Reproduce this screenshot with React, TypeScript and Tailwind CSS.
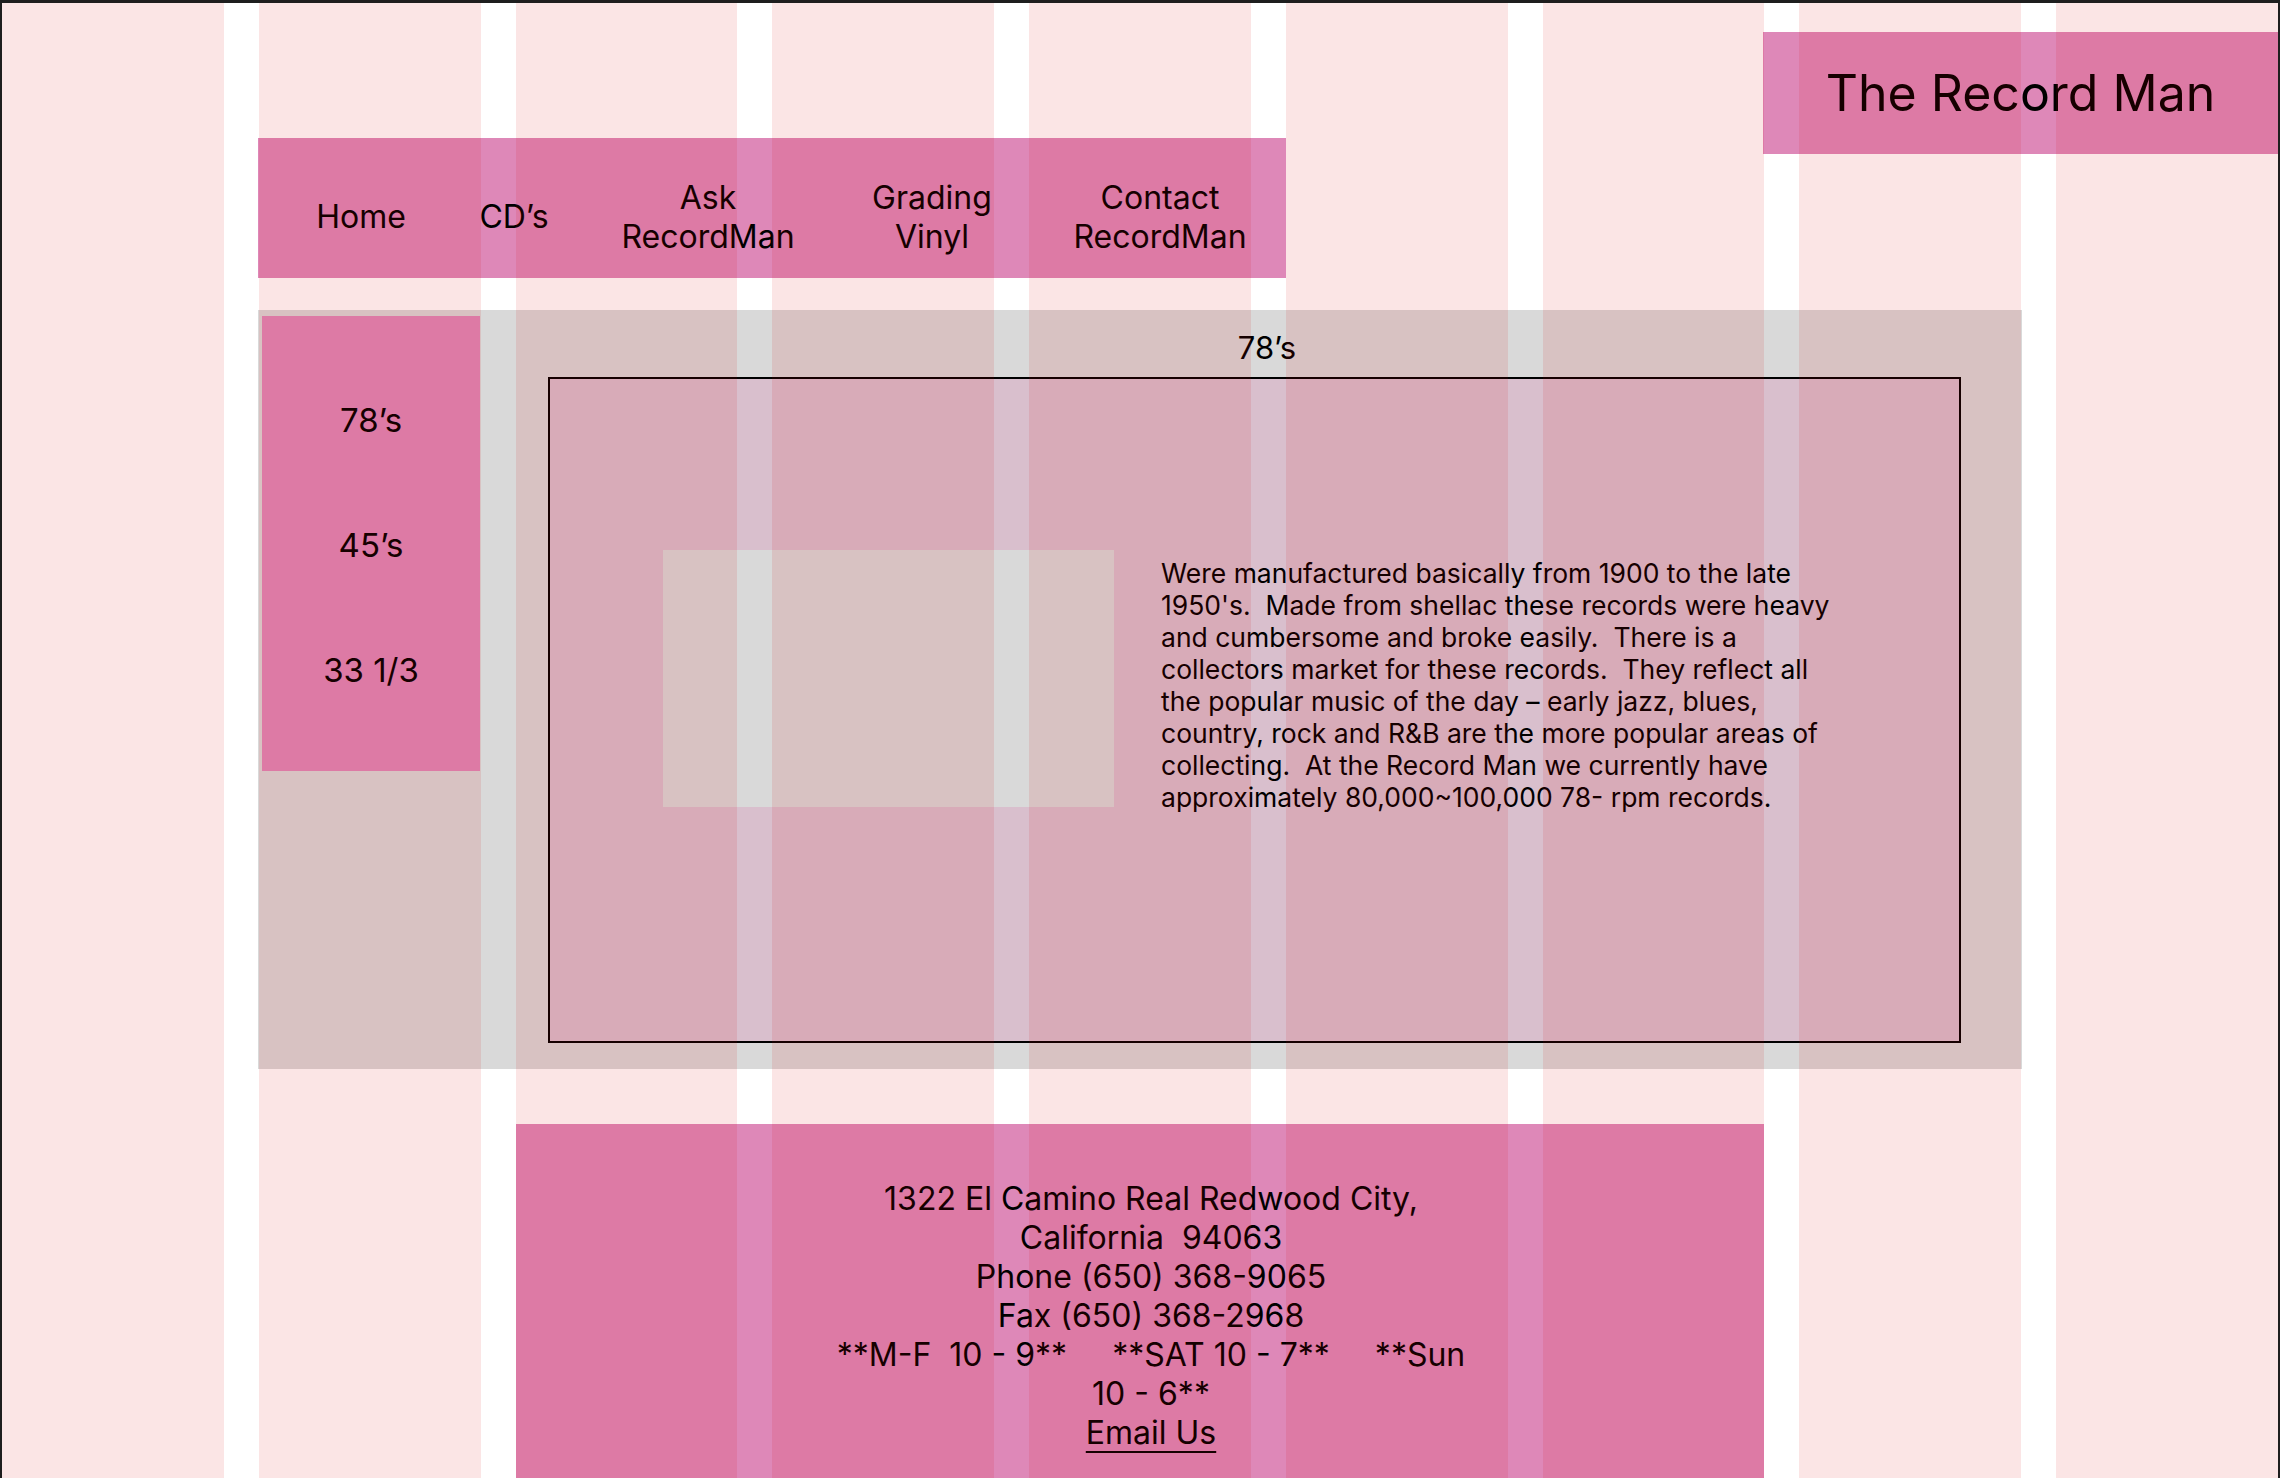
import React from 'react';

const navItems = [
  { label: 'Home', className: 'ml-[28px] w-[150px]' },
  { label: 'CD’s', className: 'ml-[3px] w-[150px]' },
  { label: 'Ask\nRecordMan', className: 'ml-[19px] w-[200px]' },
  { label: 'Grading\nVinyl', className: 'ml-[24px] w-[200px]' },
  { label: 'Contact\nRecordMan', className: 'ml-[18px] w-[220px]' },
];

const recordSizes = ['78’s', '45’s', '33 1/3'];

const blurb = [
  'Were manufactured basically from 1900 to the late',
  "1950's.  Made from shellac these records were heavy",
  'and cumbersome and broke easily.  There is a',
  'collectors market for these records.  They reflect all',
  'the popular music of the day – early jazz, blues,',
  'country, rock and R&B are the more popular areas of',
  'collecting.  At the Record Man we currently have',
  'approximately 80,000~100,000 78- rpm records.',
];

const contactLines = [
  '1322 El Camino Real Redwood City,',
  'California  94063',
  'Phone (650) 368-9065',
  'Fax (650) 368-2968',
  '**M-F  10 - 9**     **SAT 10 - 7**     **Sun',
  '10 - 6**',
];

const App: React.FC = () => {
  return (
    <div className="relative w-[2280px] h-[1478px] overflow-hidden bg-white border-t-[3px] border-x-2 border-[#1e1e1e] font-['Inter',sans-serif] text-black">
      {/* Header: nav + title */}
      <div className="flex items-start justify-between pl-[256px]">
        <nav className="mt-[135px] w-[1028px] h-[140px] bg-[#de88b8] flex items-center pt-[17px]">
          {navItems.map((item) => (
            <div
              key={item.label}
              className={`${item.className} shrink-0 text-center text-[32px] leading-[39px] whitespace-pre`}
            >
              {item.label}
            </div>
          ))}
        </nav>
        <div className="mt-[29px] w-[515px] h-[122px] bg-[#de88b8] flex items-center justify-center">
          <h1 className="text-[50px] leading-none">The Record Man</h1>
        </div>
      </div>

      {/* Main content */}
      <main className="mt-[32px] ml-[256px] w-[1764px] h-[759px] bg-[#d9d9d9] flex items-start">
        <aside className="ml-[4px] mt-[6px] w-[218px] h-[455px] bg-[#de88b8] flex flex-col items-center pt-[85px] gap-[86px]">
          {recordSizes.map((size) => (
            <div key={size} className="text-[33px] leading-[39px] whitespace-pre">
              {size}
            </div>
          ))}
        </aside>

        <section className="flex-1 pt-[18px]">
          <h2 className="pl-[32px] text-center text-[31px] leading-[39px]">78’s</h2>
          <div className="mt-[10px] ml-[68px] w-[1413px] h-[666px] border-2 border-black bg-[#d9bfcd] flex items-start pt-[171px] pl-[113px]">
            <div className="w-[451px] h-[257px] bg-[#d9d9d9] shrink-0" />
            <p className="ml-[47px] mt-[7px] text-[26.5px] leading-[32px] whitespace-pre">
              {blurb.join('\n')}
            </p>
          </div>
        </section>
      </main>

      {/* Footer */}
      <footer className="mt-[55px] ml-[514px] w-[1248px] h-[354px] bg-[#de88b8] pt-[55px] pl-[22px] text-center text-[32px] leading-[39px]">
        {contactLines.map((line) => (
          <div key={line} className="whitespace-pre">
            {line}
          </div>
        ))}
        <a href="#" className="underline decoration-2 underline-offset-[7px]">
          Email Us
        </a>
      </footer>

      {/* Layout grid overlay */}
      <div className="pointer-events-none absolute inset-0 grid grid-cols-9 gap-x-[35px]">
        {Array.from({ length: 9 }).map((_, i) => (
          <div key={i} className="bg-[rgba(215,0,0,0.1)]" />
        ))}
      </div>
    </div>
  );
};

export default App;
